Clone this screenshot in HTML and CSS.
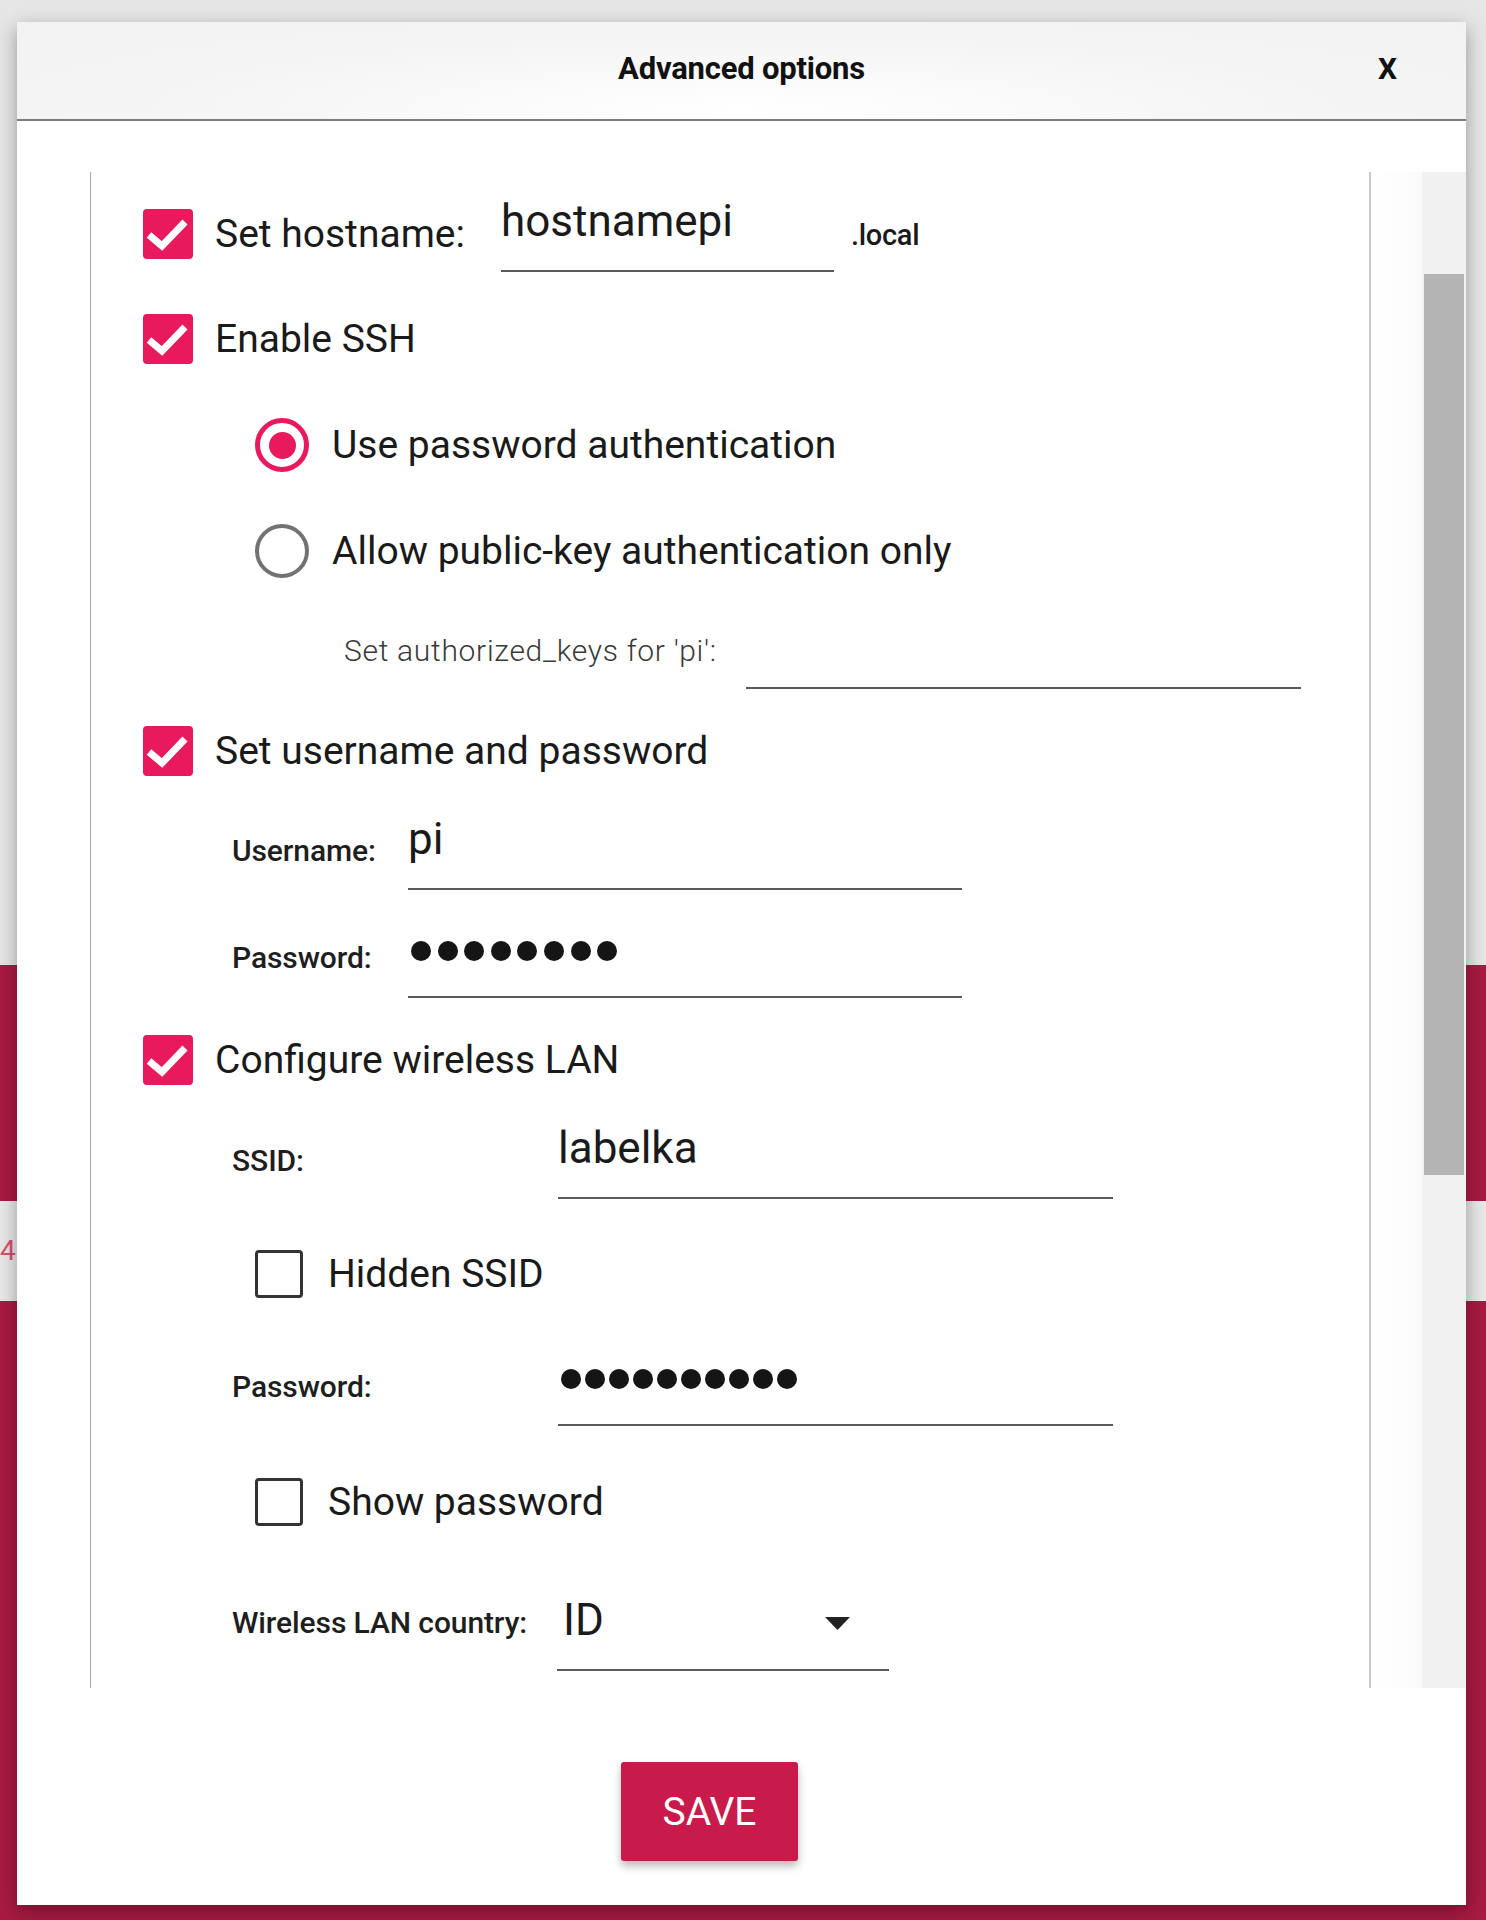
FILE: index.html
```html
<!DOCTYPE html>
<html lang="en">
<head>
<meta charset="utf-8">
<title>Advanced options</title>
<link rel="stylesheet" href="styles.css">
</head>
<body>
<div class="page">
  <div class="bg-top"></div>
  <div class="bg-red bg-red-mid"></div>
  <div class="bg-band"><span class="band-num">4</span></div>
  <div class="bg-red bg-red-rest"></div>
</div>

<div class="dialog">
  <div class="dlg-header">
    <span></span>
    <h1 class="dlg-title">Advanced options</h1>
    <span class="dlg-close">X</span>
  </div>

  <div class="dlg-body">
    <div class="scroll-frame">
      <div class="options">

        <div class="row row-hostname">
          <span class="cb cb-on"><svg viewBox="0 0 50 50" width="50" height="50"><path d="M6 26 L19 37 L42 13" fill="none" stroke="#fff" stroke-width="7"/></svg></span>
          <span class="opt-label label-host">Set hostname:</span>
          <div class="field field-host"><span class="field-text">hostnamepi</span></div>
          <span class="suffix">.local</span>
        </div>

        <div class="row row-ssh">
          <span class="cb cb-on"><svg viewBox="0 0 50 50" width="50" height="50"><path d="M6 26 L19 37 L42 13" fill="none" stroke="#fff" stroke-width="7"/></svg></span>
          <span class="opt-label">Enable SSH</span>
        </div>

        <div class="row row-radio1 indent">
          <span class="radio radio-on"><span class="radio-dot"></span></span>
          <span class="radio-label">Use password authentication</span>
        </div>

        <div class="row row-radio2 indent">
          <span class="radio"></span>
          <span class="radio-label">Allow public-key authentication only</span>
        </div>

        <div class="row row-keys">
          <span class="keys-label">Set authorized_keys for 'pi':</span>
          <div class="field field-keys"></div>
        </div>

        <div class="row row-user">
          <span class="cb cb-on"><svg viewBox="0 0 50 50" width="50" height="50"><path d="M6 26 L19 37 L42 13" fill="none" stroke="#fff" stroke-width="7"/></svg></span>
          <span class="opt-label">Set username and password</span>
        </div>

        <div class="row row-username sub">
          <span class="sub-label sub-label-user">Username:</span>
          <div class="field field-user"><span class="field-text">pi</span></div>
        </div>

        <div class="row row-pass sub">
          <span class="sub-label sub-label-user sub-label-pass">Password:</span>
          <div class="field field-user field-dots1">
            <span class="dots dots-8"><i></i><i></i><i></i><i></i><i></i><i></i><i></i><i></i></span>
          </div>
        </div>

        <div class="row row-wlan">
          <span class="cb cb-on"><svg viewBox="0 0 50 50" width="50" height="50"><path d="M6 26 L19 37 L42 13" fill="none" stroke="#fff" stroke-width="7"/></svg></span>
          <span class="opt-label">Configure wireless LAN</span>
        </div>

        <div class="row row-ssid sub">
          <span class="sub-label sub-label-wide">SSID:</span>
          <div class="field field-wide field-ssid"><span class="field-text">labelka</span></div>
        </div>

        <div class="row row-hidden indent">
          <span class="cb cb-off"></span>
          <span class="opt-label opt-label-small">Hidden SSID</span>
        </div>

        <div class="row row-pass2 sub">
          <span class="sub-label sub-label-wide sub-label-pass2">Password:</span>
          <div class="field field-wide field-dots2">
            <span class="dots dots-10"><i></i><i></i><i></i><i></i><i></i><i></i><i></i><i></i><i></i><i></i></span>
          </div>
        </div>

        <div class="row row-show indent">
          <span class="cb cb-off"></span>
          <span class="opt-label opt-label-small">Show password</span>
        </div>

        <div class="row row-country sub">
          <span class="sub-label sub-label-country">Wireless LAN country:</span>
          <div class="field field-country">
            <span class="field-text field-text-id">ID</span>
            <svg class="caret" viewBox="0 0 25 13" width="25" height="13"><path d="M0 0 H25 L12.5 13 Z" fill="#222"/></svg>
          </div>
        </div>

      </div>
    </div>
    <div class="scroll-gap"></div>
    <div class="scrollbar"><div class="thumb"></div></div>
  </div>

  <div class="dlg-footer">
    <button class="save" type="button">SAVE</button>
  </div>
</div>
</body>
</html>
```

FILE: styles.css
```css
html, body {
  margin: 0;
  padding: 0;
}
body {
  width: 1486px;
  height: 1920px;
  overflow: hidden;
  font-family: Roboto, "Liberation Sans", sans-serif;
  color: #1a1a1a;
  position: relative;
}

/* page behind the modal */
.page {
  display: flex;
  flex-direction: column;
  height: 1920px;
}
.bg-top {
  height: 965px;
  background: #e6e6e6;
}
.bg-red {
  background: #a81a41;
}
.bg-red-mid {
  height: 236px;
}
.bg-band {
  height: 100px;
  background: #e8e8e8;
  display: flex;
  align-items: center;
  overflow: hidden;
}
.band-num {
  font-family: Roboto, sans-serif;
  font-size: 28px;
  color: #d4506f;
  margin-left: 0;
  margin-top: -2px;
}
.bg-red-rest {
  flex: 1;
}

/* modal */
.dialog {
  position: absolute;
  left: 17px;
  top: 22px;
  width: 1449px;
  height: 1883px;
  background: #fff;
  box-shadow: 0 6px 18px rgba(0, 0, 0, 0.35);
  display: flex;
  flex-direction: column;
}
.dlg-header {
  height: 97px;
  border-bottom: 2px solid #7c7c7c;
  background: radial-gradient(ellipse at 50% 90%, #ffffff 0%, #f4f4f4 60%, #f2f2f2 100%);
  display: grid;
  grid-template-columns: 1fr auto 1fr;
  align-items: center;
}
.dlg-title {
  margin: 0;
  font-size: 31px;
  font-weight: 700;
  color: #111;
  letter-spacing: -0.2px;
  padding-bottom: 4px;
}
.dlg-close {
  justify-self: end;
  margin-right: 69px;
  font-size: 30px;
  font-weight: 700;
  color: #111;
  padding-bottom: 4px;
}

.dlg-body {
  display: flex;
  padding-top: 51px;
  padding-left: 73px;
  height: 1516px;
}
.scroll-frame {
  width: 1278px;
  height: 1516px;
  border-left: 1px solid #a9a9a9;
  border-right: 2px solid #c9c9c9;
  overflow: hidden;
}
.scroll-gap {
  width: 51px;
  background: linear-gradient(to right, #ffffff, #fbfbfb);
}
.scrollbar {
  width: 44px;
  height: 1516px;
  background: #f1f1f1;
  display: flex;
  flex-direction: column;
}
.thumb {
  margin: 102px 2px 0 2px;
  height: 901px;
  background: #b4b4b4;
}

.options {
  padding-top: 37px;
  padding-left: 52px;
}
.row {
  display: flex;
  align-items: flex-start;
}
.indent {
  padding-left: 112px;
}
.sub {
  padding-left: 89px;
}

/* checkboxes */
.cb {
  flex: none;
  box-sizing: border-box;
  display: block;
}
.cb-on {
  width: 50px;
  height: 50px;
  border-radius: 4px;
  background: #e8195c;
}
.cb-on svg {
  display: block;
}
.cb-off {
  width: 48px;
  height: 48px;
  border: 3px solid #333;
  border-radius: 4px;
  background: #fff;
}

.opt-label {
  margin-left: 22px;
  font-size: 39px;
  line-height: 50px;
  color: #1a1a1a;
  white-space: nowrap;
}
.opt-label-small {
  margin-left: 25px;
  line-height: 48px;
}
.label-host {
  width: 286px;
  flex: none;
}

/* radio */
.radio {
  flex: none;
  box-sizing: border-box;
  width: 54px;
  height: 54px;
  border-radius: 50%;
  border: 4px solid #727272;
  display: flex;
  align-items: center;
  justify-content: center;
}
.radio-on {
  border: 5px solid #e8195c;
}
.radio-dot {
  width: 27px;
  height: 27px;
  border-radius: 50%;
  background: #e8195c;
}
.radio-label {
  margin-left: 23px;
  font-size: 39px;
  line-height: 54px;
  white-space: nowrap;
}

/* fields */
.field {
  flex: none;
  box-sizing: border-box;
  border-bottom: 2px solid #5a5a5a;
}
.field-text {
  display: block;
  font-size: 44px;
  line-height: 1;
  color: #1a1a1a;
  white-space: nowrap;
}
.field-host {
  width: 333px;
  height: 77px;
  margin-top: -14px;
  padding-top: 4px;
}
.suffix {
  margin-left: 17px;
  margin-top: 12px;
  font-size: 29px;
  line-height: 1;
  font-weight: 500;
  color: #1a1a1a;
  letter-spacing: -0.3px;
}

.row-hostname { height: 105px; }
.row-ssh { height: 104px; }
.row-radio1 { height: 106px; }
.row-radio2 { height: 96px; }
.row-keys { height: 106px; padding-left: 201px; }
.row-user { height: 86px; }
.row-username { height: 108px; }
.row-pass { height: 115px; }
.row-wlan { height: 85px; }
.row-ssid { height: 130px; }
.row-hidden { height: 97px; }
.row-pass2 { height: 131px; }
.row-show { height: 114px; }
.row-country { height: 96px; }

.keys-label {
  flex: none;
  width: 402px;
  margin-top: 16px;
  font-size: 30px;
  font-weight: 300;
  line-height: 1;
  color: #3a3a3a;
  letter-spacing: 0.7px;
  white-space: nowrap;
}
.field-keys {
  width: 555px;
  height: 69px;
}

.sub-label {
  flex: none;
  font-size: 30px;
  font-weight: 500;
  line-height: 1;
  color: #1e1e1e;
  letter-spacing: -0.1px;
  white-space: nowrap;
}
.sub-label-user {
  width: 176px;
  margin-top: 24px;
}
.sub-label-pass {
  margin-top: 23px;
}
.sub-label-wide {
  width: 326px;
  margin-top: 26px;
}
.sub-label-pass2 {
  margin-top: 25px;
}
.sub-label-country {
  width: 325px;
  margin-top: 16px;
}

.field-user {
  width: 554px;
  height: 78px;
  padding-top: 5px;
}
.field-dots1 {
  padding-top: 21px;
}
.field-wide {
  width: 555px;
  height: 79px;
}
.field-ssid {
  padding-top: 6px;
}
.field-dots2 {
  padding-top: 22px;
}

.dots {
  display: flex;
  padding-left: 3px;
}
.dots i {
  display: block;
  width: 20px;
  height: 20px;
  border-radius: 50%;
  background: #151515;
}
.dots-8 {
  gap: 6.6px;
}
.dots-10 {
  gap: 4px;
}

.field-country {
  width: 332px;
  height: 79px;
  padding-top: 6px;
  display: flex;
  align-items: flex-start;
}
.field-text-id {
  padding-left: 6px;
}
.caret {
  display: block;
  margin-left: auto;
  margin-right: 39px;
  margin-top: 19px;
}

/* footer */
.dlg-footer {
  padding-top: 74px;
  padding-left: 604px;
}
.save {
  width: 177px;
  height: 99px;
  border: none;
  border-radius: 3px;
  background: #c81b4b;
  color: #fff;
  font-family: Roboto, "Liberation Sans", sans-serif;
  font-size: 39px;
  font-weight: 400;
  padding: 0;
  box-shadow: 0 5px 8px rgba(0, 0, 0, 0.28);
}
```
